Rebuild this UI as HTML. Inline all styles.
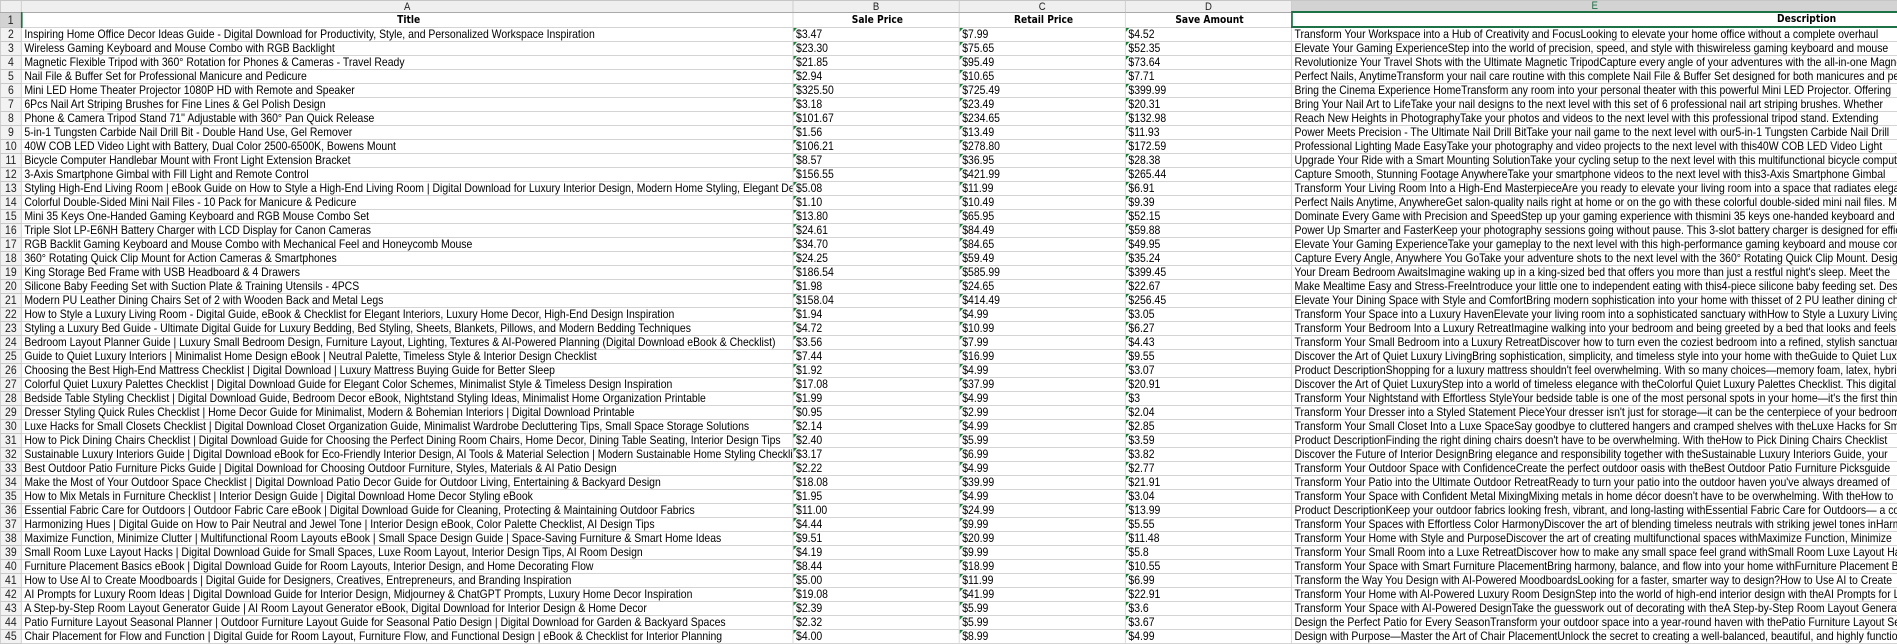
<!DOCTYPE html>
<html><head><meta charset="utf-8"><style>
*{margin:0;padding:0;box-sizing:border-box}
body{width:1897px;height:640px;overflow:hidden;background:#fff;font-family:"Liberation Sans",sans-serif;font-size:12px;color:#000}
table{border-collapse:collapse;table-layout:fixed;position:absolute;left:0;top:0;width:2181px;transform:scaleX(0.87);transform-origin:0 0}
td{height:14px;line-height:13px;border:1px solid #d4d4d4;white-space:nowrap;overflow:hidden;padding:0 0 0 3px;vertical-align:bottom}
tr.h td{height:10px;line-height:10px;background:#efefef;border-color:#c6c6c6;border-bottom:1px solid #a9a9a9;text-align:center;font-size:11px;color:#222;padding:0}
td.n{background:#f2f2f2;border-color:#c8c8c8;text-align:center;padding:0;color:#222}
tr.t td{font-family:"DejaVu Sans","Liberation Sans",sans-serif;font-weight:bold;font-size:10.5px;text-align:center;line-height:13px}
td.p{position:relative}
td.p:before{content:"";position:absolute;left:0;top:0;border-top:4px solid #1a7f37;border-right:4px solid transparent}
</style></head><body>
<table>
<colgroup><col style="width:24px"><col style="width:887px"><col style="width:191px"><col style="width:191px"><col style="width:191px"><col style="width:697px"></colgroup>
<tr class="h"><td style="background:#efefef"></td><td>A</td><td>B</td><td>C</td><td>D</td><td style="background:#d3d3d3;color:#1e7145;border-bottom:2px solid #1e7145">E</td></tr>
<tr class="t"><td class="n" style="background:#d3d3d3;font-weight:normal;font-family:'Liberation Sans',sans-serif;font-size:12px;border-right:2px solid #1e7145">1</td><td>Title</td><td>Sale Price</td><td>Retail Price</td><td>Save Amount</td><td style="border:2px solid #1e7145;text-align:right;padding-right:70px">Description</td></tr>
<tr><td class="n">2</td><td>Inspiring Home Office Decor Ideas Guide - Digital Download for Productivity, Style, and Personalized Workspace Inspiration</td><td class="p">$3.47</td><td class="p">$7.99</td><td class="p">$4.52</td><td>Transform Your Workspace into a Hub of Creativity and FocusLooking to elevate your home office without a complete overhaul</td></tr>
<tr><td class="n">3</td><td>Wireless Gaming Keyboard and Mouse Combo with RGB Backlight</td><td class="p">$23.30</td><td class="p">$75.65</td><td class="p">$52.35</td><td>Elevate Your Gaming ExperienceStep into the world of precision, speed, and style with thiswireless gaming keyboard and mouse</td></tr>
<tr><td class="n">4</td><td>Magnetic Flexible Tripod with 360° Rotation for Phones &amp; Cameras - Travel Ready</td><td class="p">$21.85</td><td class="p">$95.49</td><td class="p">$73.64</td><td>Revolutionize Your Travel Shots with the Ultimate Magnetic TripodCapture every angle of your adventures with the all-in-one Magnetic</td></tr>
<tr><td class="n">5</td><td>Nail File &amp; Buffer Set for Professional Manicure and Pedicure</td><td class="p">$2.94</td><td class="p">$10.65</td><td class="p">$7.71</td><td>Perfect Nails, AnytimeTransform your nail care routine with this complete Nail File &amp; Buffer Set designed for both manicures and pedicures</td></tr>
<tr><td class="n">6</td><td>Mini LED Home Theater Projector 1080P HD with Remote and Speaker</td><td class="p">$325.50</td><td class="p">$725.49</td><td class="p">$399.99</td><td>Bring the Cinema Experience HomeTransform any room into your personal theater with this powerful Mini LED Projector. Offering</td></tr>
<tr><td class="n">7</td><td>6Pcs Nail Art Striping Brushes for Fine Lines &amp; Gel Polish Design</td><td class="p">$3.18</td><td class="p">$23.49</td><td class="p">$20.31</td><td>Bring Your Nail Art to LifeTake your nail designs to the next level with this set of 6 professional nail art striping brushes. Whether</td></tr>
<tr><td class="n">8</td><td>Phone &amp; Camera Tripod Stand 71'' Adjustable with 360° Pan Quick Release</td><td class="p">$101.67</td><td class="p">$234.65</td><td class="p">$132.98</td><td>Reach New Heights in PhotographyTake your photos and videos to the next level with this professional tripod stand. Extending</td></tr>
<tr><td class="n">9</td><td>5-in-1 Tungsten Carbide Nail Drill Bit - Double Hand Use, Gel Remover</td><td class="p">$1.56</td><td class="p">$13.49</td><td class="p">$11.93</td><td>Power Meets Precision - The Ultimate Nail Drill BitTake your nail game to the next level with our5-in-1 Tungsten Carbide Nail Drill</td></tr>
<tr><td class="n">10</td><td>40W COB LED Video Light with Battery, Dual Color 2500-6500K, Bowens Mount</td><td class="p">$106.21</td><td class="p">$278.80</td><td class="p">$172.59</td><td>Professional Lighting Made EasyTake your photography and video projects to the next level with this40W COB LED Video Light</td></tr>
<tr><td class="n">11</td><td>Bicycle Computer Handlebar Mount with Front Light Extension Bracket</td><td class="p">$8.57</td><td class="p">$36.95</td><td class="p">$28.38</td><td>Upgrade Your Ride with a Smart Mounting SolutionTake your cycling setup to the next level with this multifunctional bicycle computer</td></tr>
<tr><td class="n">12</td><td>3-Axis Smartphone Gimbal with Fill Light and Remote Control</td><td class="p">$156.55</td><td class="p">$421.99</td><td class="p">$265.44</td><td>Capture Smooth, Stunning Footage AnywhereTake your smartphone videos to the next level with this3-Axis Smartphone Gimbal</td></tr>
<tr><td class="n">13</td><td>Styling High-End Living Room | eBook Guide on How to Style a High-End Living Room | Digital Download for Luxury Interior Design, Modern Home Styling, Elegant Decor</td><td class="p">$5.08</td><td class="p">$11.99</td><td class="p">$6.91</td><td>Transform Your Living Room Into a High-End MasterpieceAre you ready to elevate your living room into a space that radiates elegance</td></tr>
<tr><td class="n">14</td><td>Colorful Double-Sided Mini Nail Files - 10 Pack for Manicure &amp; Pedicure</td><td class="p">$1.10</td><td class="p">$10.49</td><td class="p">$9.39</td><td>Perfect Nails Anytime, AnywhereGet salon-quality nails right at home or on the go with these colorful double-sided mini nail files. Made</td></tr>
<tr><td class="n">15</td><td>Mini 35 Keys One-Handed Gaming Keyboard and RGB Mouse Combo Set</td><td class="p">$13.80</td><td class="p">$65.95</td><td class="p">$52.15</td><td>Dominate Every Game with Precision and SpeedStep up your gaming experience with thismini 35 keys one-handed keyboard and</td></tr>
<tr><td class="n">16</td><td>Triple Slot LP-E6NH Battery Charger with LCD Display for Canon Cameras</td><td class="p">$24.61</td><td class="p">$84.49</td><td class="p">$59.88</td><td>Power Up Smarter and FasterKeep your photography sessions going without pause. This 3-slot battery charger is designed for efficiency</td></tr>
<tr><td class="n">17</td><td>RGB Backlit Gaming Keyboard and Mouse Combo with Mechanical Feel and Honeycomb Mouse</td><td class="p">$34.70</td><td class="p">$84.65</td><td class="p">$49.95</td><td>Elevate Your Gaming ExperienceTake your gameplay to the next level with this high-performance gaming keyboard and mouse combo</td></tr>
<tr><td class="n">18</td><td>360° Rotating Quick Clip Mount for Action Cameras &amp; Smartphones</td><td class="p">$24.25</td><td class="p">$59.49</td><td class="p">$35.24</td><td>Capture Every Angle, Anywhere You GoTake your adventure shots to the next level with the 360° Rotating Quick Clip Mount. Designed</td></tr>
<tr><td class="n">19</td><td>King Storage Bed Frame with USB Headboard &amp; 4 Drawers</td><td class="p">$186.54</td><td class="p">$585.99</td><td class="p">$399.45</td><td>Your Dream Bedroom AwaitsImagine waking up in a king-sized bed that offers you more than just a restful night's sleep. Meet the</td></tr>
<tr><td class="n">20</td><td>Silicone Baby Feeding Set with Suction Plate &amp; Training Utensils - 4PCS</td><td class="p">$1.98</td><td class="p">$24.65</td><td class="p">$22.67</td><td>Make Mealtime Easy and Stress-FreeIntroduce your little one to independent eating with this4-piece silicone baby feeding set. Designed</td></tr>
<tr><td class="n">21</td><td>Modern PU Leather Dining Chairs Set of 2 with Wooden Back and Metal Legs</td><td class="p">$158.04</td><td class="p">$414.49</td><td class="p">$256.45</td><td>Elevate Your Dining Space with Style and ComfortBring modern sophistication into your home with thisset of 2 PU leather dining chairs</td></tr>
<tr><td class="n">22</td><td>How to Style a Luxury Living Room - Digital Guide, eBook &amp; Checklist for Elegant Interiors, Luxury Home Decor, High-End Design Inspiration</td><td class="p">$1.94</td><td class="p">$4.99</td><td class="p">$3.05</td><td>Transform Your Space into a Luxury HavenElevate your living room into a sophisticated sanctuary withHow to Style a Luxury Living</td></tr>
<tr><td class="n">23</td><td>Styling a Luxury Bed Guide - Ultimate Digital Guide for Luxury Bedding, Bed Styling, Sheets, Blankets, Pillows, and Modern Bedding Techniques</td><td class="p">$4.72</td><td class="p">$10.99</td><td class="p">$6.27</td><td>Transform Your Bedroom Into a Luxury RetreatImagine walking into your bedroom and being greeted by a bed that looks and feels</td></tr>
<tr><td class="n">24</td><td>Bedroom Layout Planner Guide | Luxury Small Bedroom Design, Furniture Layout, Lighting, Textures &amp; AI-Powered Planning (Digital Download eBook &amp; Checklist)</td><td class="p">$3.56</td><td class="p">$7.99</td><td class="p">$4.43</td><td>Transform Your Small Bedroom into a Luxury RetreatDiscover how to turn even the coziest bedroom into a refined, stylish sanctuary</td></tr>
<tr><td class="n">25</td><td>Guide to Quiet Luxury Interiors | Minimalist Home Design eBook | Neutral Palette, Timeless Style &amp; Interior Design Checklist</td><td class="p">$7.44</td><td class="p">$16.99</td><td class="p">$9.55</td><td>Discover the Art of Quiet Luxury LivingBring sophistication, simplicity, and timeless style into your home with theGuide to Quiet Luxury</td></tr>
<tr><td class="n">26</td><td>Choosing the Best High-End Mattress Checklist | Digital Download | Luxury Mattress Buying Guide for Better Sleep</td><td class="p">$1.92</td><td class="p">$4.99</td><td class="p">$3.07</td><td>Product DescriptionShopping for a luxury mattress shouldn't feel overwhelming. With so many choices—memory foam, latex, hybrid</td></tr>
<tr><td class="n">27</td><td>Colorful Quiet Luxury Palettes Checklist | Digital Download Guide for Elegant Color Schemes, Minimalist Style &amp; Timeless Design Inspiration</td><td class="p">$17.08</td><td class="p">$37.99</td><td class="p">$20.91</td><td>Discover the Art of Quiet LuxuryStep into a world of timeless elegance with theColorful Quiet Luxury Palettes Checklist. This digital</td></tr>
<tr><td class="n">28</td><td>Bedside Table Styling Checklist | Digital Download Guide, Bedroom Decor eBook, Nightstand Styling Ideas, Minimalist Home Organization Printable</td><td class="p">$1.99</td><td class="p">$4.99</td><td class="p">$3</td><td>Transform Your Nightstand with Effortless StyleYour bedside table is one of the most personal spots in your home—it's the first thing</td></tr>
<tr><td class="n">29</td><td>Dresser Styling Quick Rules Checklist | Home Decor Guide for Minimalist, Modern &amp; Bohemian Interiors | Digital Download Printable</td><td class="p">$0.95</td><td class="p">$2.99</td><td class="p">$2.04</td><td>Transform Your Dresser into a Styled Statement PieceYour dresser isn't just for storage—it can be the centerpiece of your bedroom</td></tr>
<tr><td class="n">30</td><td>Luxe Hacks for Small Closets Checklist | Digital Download Closet Organization Guide, Minimalist Wardrobe Decluttering Tips, Small Space Storage Solutions</td><td class="p">$2.14</td><td class="p">$4.99</td><td class="p">$2.85</td><td>Transform Your Small Closet Into a Luxe SpaceSay goodbye to cluttered hangers and cramped shelves with theLuxe Hacks for Small</td></tr>
<tr><td class="n">31</td><td>How to Pick Dining Chairs Checklist | Digital Download Guide for Choosing the Perfect Dining Room Chairs, Home Decor, Dining Table Seating, Interior Design Tips</td><td class="p">$2.40</td><td class="p">$5.99</td><td class="p">$3.59</td><td>Product DescriptionFinding the right dining chairs doesn't have to be overwhelming. With theHow to Pick Dining Chairs Checklist</td></tr>
<tr><td class="n">32</td><td>Sustainable Luxury Interiors Guide | Digital Download eBook for Eco-Friendly Interior Design, AI Tools &amp; Material Selection | Modern Sustainable Home Styling Checklist</td><td class="p">$3.17</td><td class="p">$6.99</td><td class="p">$3.82</td><td>Discover the Future of Interior DesignBring elegance and responsibility together with theSustainable Luxury Interiors Guide, your</td></tr>
<tr><td class="n">33</td><td>Best Outdoor Patio Furniture Picks Guide | Digital Download for Choosing Outdoor Furniture, Styles, Materials &amp; AI Patio Design</td><td class="p">$2.22</td><td class="p">$4.99</td><td class="p">$2.77</td><td>Transform Your Outdoor Space with ConfidenceCreate the perfect outdoor oasis with theBest Outdoor Patio Furniture Picksguide</td></tr>
<tr><td class="n">34</td><td>Make the Most of Your Outdoor Space Checklist | Digital Download Patio Decor Guide for Outdoor Living, Entertaining &amp; Backyard Design</td><td class="p">$18.08</td><td class="p">$39.99</td><td class="p">$21.91</td><td>Transform Your Patio into the Ultimate Outdoor RetreatReady to turn your patio into the outdoor haven you've always dreamed of</td></tr>
<tr><td class="n">35</td><td>How to Mix Metals in Furniture Checklist | Interior Design Guide | Digital Download Home Decor Styling eBook</td><td class="p">$1.95</td><td class="p">$4.99</td><td class="p">$3.04</td><td>Transform Your Space with Confident Metal MixingMixing metals in home décor doesn't have to be overwhelming. With theHow to</td></tr>
<tr><td class="n">36</td><td>Essential Fabric Care for Outdoors | Outdoor Fabric Care eBook | Digital Download Guide for Cleaning, Protecting &amp; Maintaining Outdoor Fabrics</td><td class="p">$11.00</td><td class="p">$24.99</td><td class="p">$13.99</td><td>Product DescriptionKeep your outdoor fabrics looking fresh, vibrant, and long-lasting withEssential Fabric Care for Outdoors— a comprehensive</td></tr>
<tr><td class="n">37</td><td>Harmonizing Hues | Digital Guide on How to Pair Neutral and Jewel Tone | Interior Design eBook, Color Palette Checklist, AI Design Tips</td><td class="p">$4.44</td><td class="p">$9.99</td><td class="p">$5.55</td><td>Transform Your Spaces with Effortless Color HarmonyDiscover the art of blending timeless neutrals with striking jewel tones inHarmonizing</td></tr>
<tr><td class="n">38</td><td>Maximize Function, Minimize Clutter | Multifunctional Room Layouts eBook | Small Space Design Guide | Space-Saving Furniture &amp; Smart Home Ideas</td><td class="p">$9.51</td><td class="p">$20.99</td><td class="p">$11.48</td><td>Transform Your Home with Style and PurposeDiscover the art of creating multifunctional spaces withMaximize Function, Minimize</td></tr>
<tr><td class="n">39</td><td>Small Room Luxe Layout Hacks | Digital Download Guide for Small Spaces, Luxe Room Layout, Interior Design Tips, AI Room Design</td><td class="p">$4.19</td><td class="p">$9.99</td><td class="p">$5.8</td><td>Transform Your Small Room into a Luxe RetreatDiscover how to make any small space feel grand withSmall Room Luxe Layout Hacks</td></tr>
<tr><td class="n">40</td><td>Furniture Placement Basics eBook | Digital Download Guide for Room Layouts, Interior Design, and Home Decorating Flow</td><td class="p">$8.44</td><td class="p">$18.99</td><td class="p">$10.55</td><td>Transform Your Space with Smart Furniture PlacementBring harmony, balance, and flow into your home withFurniture Placement Basics</td></tr>
<tr><td class="n">41</td><td>How to Use AI to Create Moodboards | Digital Guide for Designers, Creatives, Entrepreneurs, and Branding Inspiration</td><td class="p">$5.00</td><td class="p">$11.99</td><td class="p">$6.99</td><td>Transform the Way You Design with AI-Powered MoodboardsLooking for a faster, smarter way to design?How to Use AI to Create</td></tr>
<tr><td class="n">42</td><td>AI Prompts for Luxury Room Ideas | Digital Download Guide for Interior Design, Midjourney &amp; ChatGPT Prompts, Luxury Home Decor Inspiration</td><td class="p">$19.08</td><td class="p">$41.99</td><td class="p">$22.91</td><td>Transform Your Home with AI-Powered Luxury Room DesignStep into the world of high-end interior design with theAI Prompts for Luxury</td></tr>
<tr><td class="n">43</td><td>A Step-by-Step Room Layout Generator Guide | AI Room Layout Generator eBook, Digital Download for Interior Design &amp; Home Decor</td><td class="p">$2.39</td><td class="p">$5.99</td><td class="p">$3.6</td><td>Transform Your Space with AI-Powered DesignTake the guesswork out of decorating with theA Step-by-Step Room Layout Generator</td></tr>
<tr><td class="n">44</td><td>Patio Furniture Layout Seasonal Planner | Outdoor Furniture Layout Guide for Seasonal Patio Design | Digital Download for Garden &amp; Backyard Spaces</td><td class="p">$2.32</td><td class="p">$5.99</td><td class="p">$3.67</td><td>Design the Perfect Patio for Every SeasonTransform your outdoor space into a year-round haven with thePatio Furniture Layout Seasonal</td></tr>
<tr><td class="n">45</td><td>Chair Placement for Flow and Function | Digital Guide for Room Layout, Furniture Flow, and Functional Design | eBook &amp; Checklist for Interior Planning</td><td class="p">$4.00</td><td class="p">$8.99</td><td class="p">$4.99</td><td>Design with Purpose—Master the Art of Chair PlacementUnlock the secret to creating a well-balanced, beautiful, and highly functional</td></tr>
</table>
</body></html>
